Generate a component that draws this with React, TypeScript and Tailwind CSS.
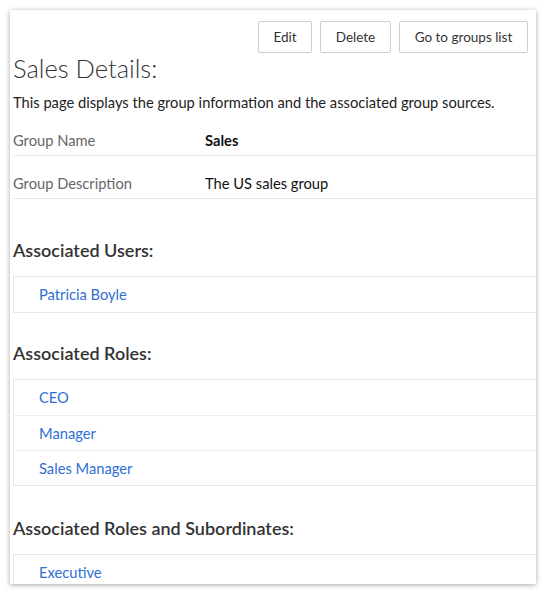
import React from 'react';

const font = { fontFamily: 'Lato, "Open Sans", sans-serif' };

const Section = ({ title, items, mt }: { title: string; items: string[]; mt: string }) => (
  <div>
    <h3 className={`${mt} h-[24px] leading-[24px] text-[18px] font-semibold text-[#333]`}>{title}</h3>
    <div className="mt-[14px] w-[540px] border border-[#e8e8e8]">
      {items.map((it, i) => (
        <div
          key={i}
          className={`h-[35px] flex items-center pl-[25px] text-[14.7px] text-[#2f6ed6] ${i > 0 ? 'border-t border-[#ededed]' : ''}`}
        >
          {it}
        </div>
      ))}
    </div>
  </div>
);

export default function App() {
  return (
    <div className="w-[545px] h-[594px] bg-white pt-[10px] pl-[10px]" style={font}>
      <div className="w-[526px] h-[574px] overflow-hidden bg-white shadow-[0_1px_5px_rgba(0,0,0,0.35)]">
        <div className="pl-[3px] pt-[11px]">
          <div className="flex justify-end gap-[8px] pr-[8px]">
            <button className="h-[32px] w-[54px] border border-[#cfcfcf] rounded-[2px] text-[13.5px] text-[#333]">Edit</button>
            <button className="h-[32px] w-[71px] border border-[#cfcfcf] rounded-[2px] text-[13.5px] text-[#333]">Delete</button>
            <button className="h-[32px] w-[129px] border border-[#cfcfcf] rounded-[2px] text-[13.5px] text-[#333]">Go to groups list</button>
          </div>
          <h1 className="h-[30px] leading-[30px] text-[25.5px] font-light text-[#333]">Sales Details:</h1>
          <p className="mt-[10px] text-[14.7px] text-[#222] leading-[18px]">
            This page displays the group information and the associated group sources.
          </p>
          <div className="mt-[2px]">
            <div className="w-[540px] h-[43px] pt-[13px] flex items-center border-b border-[#e5e5e5] text-[14.7px]">
              <span className="w-[192px] text-[#666]">Group Name</span>
              <span className="font-bold text-[#111]">Sales</span>
            </div>
            <div className="w-[540px] h-[43px] pt-[13px] flex items-center border-b border-[#e5e5e5] text-[14.7px]">
              <span className="w-[192px] text-[#666]">Group Description</span>
              <span className="text-[#111]">The US sales group</span>
            </div>
          </div>
          <Section mt="mt-[39px]" title="Associated Users:" items={['Patricia Boyle']} />
          <Section mt="mt-[28px]" title="Associated Roles:" items={['CEO', 'Manager', 'Sales Manager']} />
          <Section mt="mt-[30px]" title="Associated Roles and Subordinates:" items={['Executive']} />
        </div>
      </div>
    </div>
  );
}
